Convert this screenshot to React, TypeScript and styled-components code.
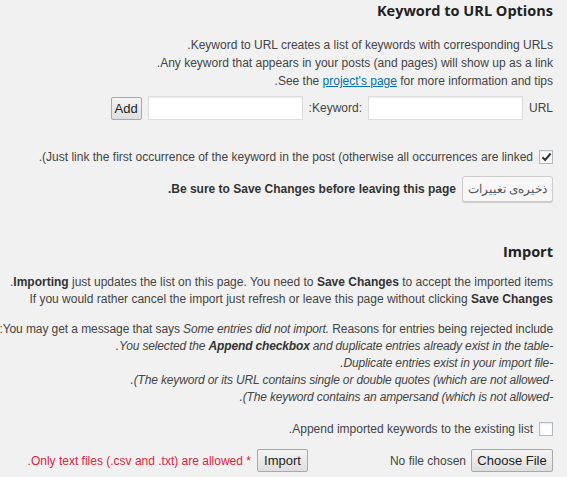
import React from "react";
import styled, { createGlobalStyle } from "styled-components";

const GlobalStyle = createGlobalStyle`
  html, body {
    margin: 0;
    padding: 0;
    background: #f1f1f1;
  }
  body {
    font-family: "Liberation Sans", Arial, sans-serif;
    font-size: 12px;
    color: #444;
    overflow: hidden;
  }
`;

const Page = styled.div`
  direction: rtl;
  width: 567px;
  height: 477px;
  padding: 0 14px 0 0;
  box-sizing: border-box;
  overflow: hidden;
`;

const Heading = styled.h2<{ $top: number }>`
  font-family: "Open Sans", "Liberation Sans", sans-serif;
  font-size: 14.5px;
  font-weight: 700;
  color: #222;
  margin: ${({ $top }) => $top}px 0 0;
  line-height: 20px;
`;

const Lines = styled.div<{ $top: number; $lh?: number }>`
  margin-top: ${({ $top }) => $top}px;
  line-height: ${({ $lh }) => $lh ?? 18}px;
  white-space: nowrap;

  p {
    margin: 0;
  }
  a {
    color: #0073aa;
    text-decoration: underline;
  }
  em {
    font-style: italic;
    letter-spacing: -0.15px;
  }
`;

const TightLine = styled.p`
  letter-spacing: -0.08px;
`;

const Visual = styled.bdo`
  unicode-bidi: bidi-override;
`;

const Row = styled.div<{ $top: number }>`
  display: flex;
  align-items: center;
  gap: 6px;
  margin-top: ${({ $top }) => $top}px;
  white-space: nowrap;
`;

const Label = styled.label`
  color: #444;
`;

const TextInput = styled.input`
  width: 155px;
  height: 24px;
  box-sizing: border-box;
  border: 1px solid #ddd;
  background: #fff;
  box-shadow: inset 0 1px 2px rgba(0, 0, 0, 0.07);
  margin: 0;
`;

const OldButton = styled.button<{ $w: number }>`
  font-family: "Liberation Sans", Arial, sans-serif;
  font-size: 13px;
  color: #222;
  width: ${({ $w }) => $w}px;
  height: 23px;
  padding: 0;
  border: 1px solid #a9a9a9;
  border-radius: 2px;
  background: linear-gradient(#f4f4f4, #dedede);
  margin: 0;
  direction: ltr;
`;

const SaveButton = styled.button`
  font-family: "Liberation Sans", sans-serif;
  font-size: 12px;
  color: #555;
  width: 91px;
  height: 26px;
  padding: 0;
  border: 1px solid #ccc;
  border-radius: 3px;
  background: #f7f7f7;
  box-shadow: 0 1px 0 #ccc;
  margin: 0;
`;

const Box = styled.span`
  display: inline-flex;
  align-items: center;
  justify-content: center;
  width: 14px;
  height: 14px;
  box-sizing: border-box;
  border: 1px solid #b4b9be;
  background: #fff;
  box-shadow: inset 0 1px 2px rgba(0, 0, 0, 0.1);
`;

const FileField = styled.div`
  display: flex;
  align-items: center;
  gap: 5px;
  width: 239px;
`;

const Strong = styled.span`
  font-weight: 700;
  color: #333;
`;

const Red = styled.span`
  color: #e0233d;
`;

const Checkbox: React.FC<{ checked?: boolean }> = ({ checked }) => (
  <Box>
    {checked && (
      <svg width="11" height="10" viewBox="0 0 11 10">
        <path d="M1.5 5.2 L4.2 8 L9.6 1.5" fill="none" stroke="#333" strokeWidth="2" />
      </svg>
    )}
  </Box>
);

export default function App() {
  return (
    <>
      <GlobalStyle />
      <Page>
        <Heading $top={1}>Keyword to URL Options</Heading>
        <Lines $top={15}>
          <p>Keyword to URL creates a list of keywords with corresponding URLs.</p>
          <p>Any keyword that appears in your posts (and pages) will show up as a link.</p>
          <p>
            See the <a href="#">project's page</a> for more information and tips.
          </p>
        </Lines>
        <Row $top={6}>
          <Label>URL</Label>
          <TextInput />
          <Label>:Keyword:</Label>
          <TextInput />
          <OldButton $w={31}>Add</OldButton>
        </Row>
        <Row $top={30}>
          <Checkbox checked />
          <Visual dir="ltr">
            .(Just link the first occurrence of the keyword in the post (otherwise all occurrences are linked
          </Visual>
        </Row>
        <Row $top={12}>
          <SaveButton>ذخیره‌ی تغییرات</SaveButton>
          <Strong>Be sure to Save Changes before leaving this page.</Strong>
        </Row>
        <Heading $top={40}>Import</Heading>
        <Lines $top={12} $lh={17}>
          <p>
            <Strong>Importing</Strong> just updates the list on this page. You need to{" "}
            <Strong>Save Changes</Strong> to accept the imported items.
          </p>
          <p>
            If you would rather cancel the import just refresh or leave this page without clicking{" "}
            <Strong>Save Changes</Strong>
          </p>
        </Lines>
        <Lines $top={13} $lh={17}>
          <TightLine>
            You may get a message that says <em>Some entries did not import.</em> Reasons for entries
            being rejected include:
          </TightLine>
          <p>
            <em>
              -You selected the <Strong>Append checkbox</Strong> and duplicate entries already exist in
              the table.
            </em>
          </p>
          <p>
            <em>-Duplicate entries exist in your import file.</em>
          </p>
          <p>
            <em>
              <Visual dir="ltr">
                .(The keyword or its URL contains single or double quotes (which are not allowed-
              </Visual>
            </em>
          </p>
          <p>
            <em>
              <Visual dir="ltr">.(The keyword contains an ampersand (which is not allowed-</Visual>
            </em>
          </p>
        </Lines>
        <Row $top={16}>
          <Checkbox />
          <span>Append imported keywords to the existing list.</span>
        </Row>
        <Row $top={13}>
          <FileField>
            <OldButton $w={82}>Choose File</OldButton>
            <span>No file chosen</span>
          </FileField>
          <OldButton $w={51}>Import</OldButton>
          <Red>* Only text files (.csv and .txt) are allowed.</Red>
        </Row>
      </Page>
    </>
  );
}
